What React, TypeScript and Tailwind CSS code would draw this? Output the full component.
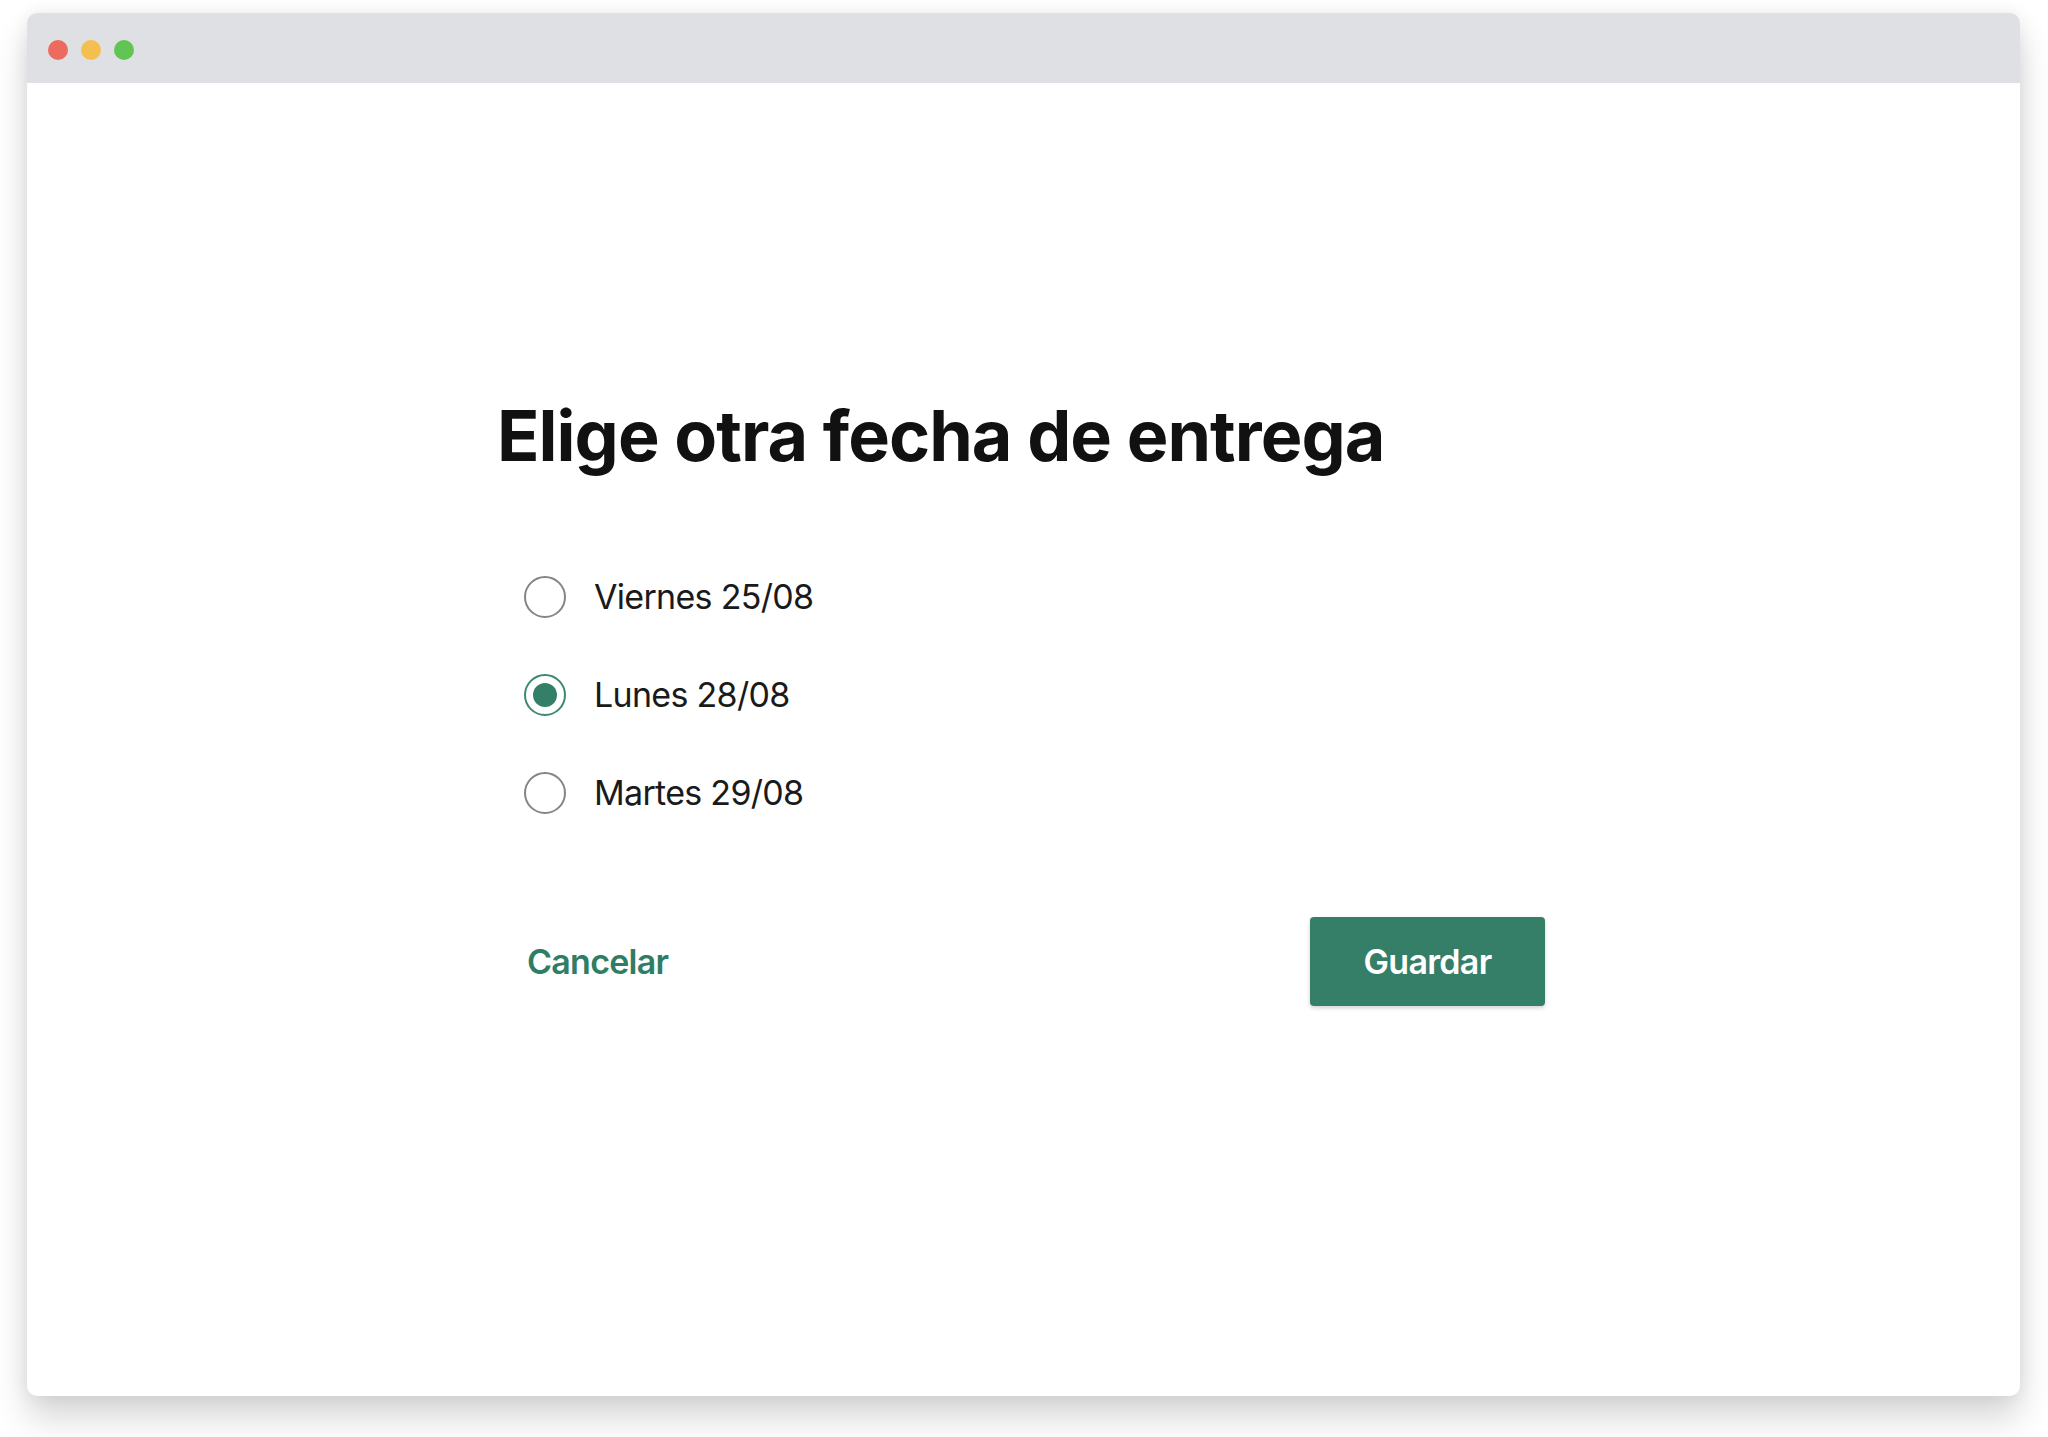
import React, { useState } from 'react';

const options = [
  { id: 'vie', label: 'Viernes 25/08' },
  { id: 'lun', label: 'Lunes 28/08' },
  { id: 'mar', label: 'Martes 29/08' },
];

const App = () => {
  const [selected, setSelected] = useState('lun');

  return (
    <div className="w-[2048px] h-[1437px] bg-white pt-[13px] pl-[27px] font-['Inter',sans-serif]">
      <div className="w-[1993px] h-[1383px] bg-white rounded-[10px] overflow-hidden shadow-[0_22px_34px_rgba(0,0,0,0.16),0_0_18px_rgba(0,0,0,0.07)] flex flex-col">
        <div className="h-[70px] bg-[#dfe0e4] flex items-start pt-[27px] pl-[21px] gap-[13px]">
          <span className="w-[20px] h-[20px] rounded-full bg-[#ec6a5e]" />
          <span className="w-[20px] h-[20px] rounded-full bg-[#f4bf4f]" />
          <span className="w-[20px] h-[20px] rounded-full bg-[#61c554]" />
        </div>

        <div className="pt-[318px] pl-[470px]">
          <div className="w-[1048px]">
            <h1 className="text-[70px] leading-none font-bold text-[#111111] tracking-[-0.95px]">
              Elige otra fecha de entrega
            </h1>

            <div className="mt-[105px] ml-[27px] flex flex-col gap-[56px]">
              {options.map((opt) => {
                const active = selected === opt.id;
                return (
                  <label
                    key={opt.id}
                    className="h-[42px] flex items-center gap-[28px] cursor-pointer"
                    onClick={() => setSelected(opt.id)}
                  >
                    <span
                      className={
                        active
                          ? 'w-[42px] h-[42px] rounded-full border-2 border-[#3a8a6f] flex items-center justify-center'
                          : 'w-[42px] h-[42px] rounded-full border-2 border-[#858585] flex items-center justify-center'
                      }
                    >
                      {active && <span className="w-[24px] h-[24px] rounded-full bg-[#347f68]" />}
                    </span>
                    <span className="text-[34px] leading-none text-[#1a1a1a] tracking-[-0.7px]">{opt.label}</span>
                  </label>
                );
              })}
            </div>

            <div className="mt-[103px] flex items-center justify-between">
              <button className="ml-[30px] text-[34px] leading-none font-semibold text-[#2f7d64] tracking-[-0.75px]">
                Cancelar
              </button>
              <button className="w-[235px] h-[89px] rounded-[4px] bg-[#357f69] text-white text-[34px] leading-none font-semibold tracking-[-0.7px] shadow-[0_2px_4px_rgba(0,0,0,0.18)]">
                Guardar
              </button>
            </div>
          </div>
        </div>
      </div>
    </div>
  );
};

export default App;
